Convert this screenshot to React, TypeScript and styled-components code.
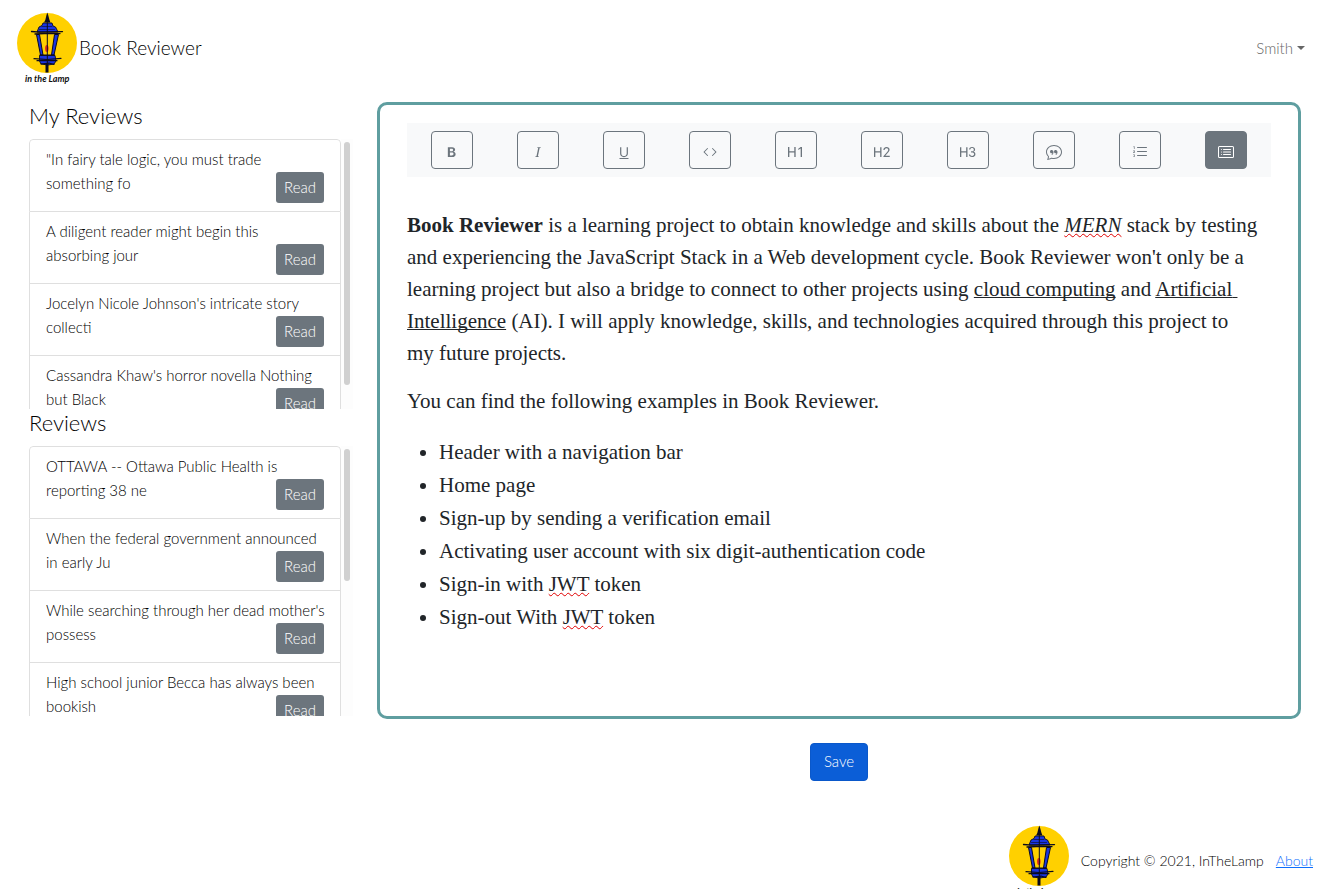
import React from "react";
import styled, { createGlobalStyle } from "styled-components";
import {
  BsTypeBold, BsTypeItalic, BsTypeUnderline, BsCode, BsTypeH1, BsTypeH2, BsTypeH3,
  BsChatQuote, BsListOl, BsCardList,
} from "react-icons/bs";

const GlobalStyle = createGlobalStyle`
  *, *::before, *::after { box-sizing: border-box; }
  body {
    margin: 0;
    background: #fff;
    color: #000;
    font-family: Lato, "Open Sans", sans-serif;
    font-size: 15px;
    font-weight: 300;
    line-height: 24px;
  }
`;

const Navbar = styled.header`
  display: flex;
  align-items: center;
  justify-content: space-between;
  padding: 11px 26px 13px 17px;
`;

const Brand = styled.a`
  display: flex;
  align-items: center;
  gap: 2px;
  color: inherit;
  font-size: 19px;
  text-decoration: none;
`;

const UserMenu = styled.button`
  display: flex;
  align-items: center;
  gap: 4px;
  padding: 0;
  border: 0;
  background: none;
  color: #666;
  font: inherit;
`;

const Caret = styled.span`
  border-top: 4px solid #666;
  border-left: 4px solid transparent;
  border-right: 4px solid transparent;
`;

const Main = styled.main`
  display: grid;
  grid-template-columns: 324px 1fr;
  column-gap: 24px;
  padding: 4px 30px 0 29px;
`;

const Heading = styled.h2`
  margin: 0;
  padding-bottom: 10px;
  font-size: 22px;
  font-weight: 300;
  line-height: 27px;
`;

const Scroller = styled.div`
  display: flex;
  height: 270px;
`;

const List = styled.ul`
  flex: 1;
  margin: 0;
  padding: 0;
  list-style: none;
  overflow-y: auto;
  scrollbar-width: none;
  border-radius: 4px 4px 0 0;
`;

const Item = styled.li`
  display: flow-root;
  padding: 7px 12px 9px 16px;
  border: 1px solid #dfdfdf;
  border-top-width: 0;

  &:first-child {
    border-top-width: 1px;
    border-radius: 4px 4px 0 0;
  }
`;

const Rail = styled.div`
  width: 12px;
  padding: 3px;
  background: #fdfdfd;
`;

const Thumb = styled.div<{ $size: number }>`
  height: ${(p) => p.$size}%;
  border-radius: 3px;
  background: #d0d0d0;
`;

const ReadButton = styled.button`
  float: right;
  width: 48px;
  height: 31px;
  margin: 1px 4px 0 0;
  padding: 0 0 2px;
  border: 0;
  border-radius: 3px;
  background: #6c757d;
  color: #fff;
  font: inherit;

  li & { margin-bottom: -1px; }
`;

const Editor = styled.div`
  min-height: 617px;
  padding: 18px 27px;
  border: 3px solid #5f9ea0;
  border-radius: 10px;
`;

const Toolbar = styled.div`
  display: flex;
  justify-content: space-between;
  padding: 8px 24px;
  background: #f8f9fa;
`;

const Tool = styled.button<{ $active?: boolean }>`
  display: flex;
  align-items: center;
  justify-content: center;
  width: 42px;
  height: 38px;
  padding: 4px 0 0;
  border: 1px solid #6c757d;
  border-radius: 4px;
  background: ${(p) => (p.$active ? "#6c757d" : "transparent")};
  color: ${(p) => (p.$active ? "#fff" : "#6c757d")};
  font-size: 16px;
`;

const Document = styled.div`
  padding-top: 32px;
  outline: none;
  color: #212529;
  font-family: "Liberation Serif", serif;
  font-size: 21px;
  font-weight: 400;
  line-height: 32px;

  p { margin: 0 0 16px; }
  u { text-decoration-thickness: 1px; text-decoration-skip-ink: none; }
  ul { margin: 0; padding: 3px 0 0 32px; line-height: 33px; }
`;

const Misspelt = styled.span`
  text-decoration: underline wavy #e00000 1px;
  text-decoration-skip-ink: none;
`;

const Actions = styled.div`
  display: flex;
  justify-content: center;
  padding-top: 24px;
`;

const SaveButton = styled.button`
  width: 58px;
  height: 38px;
  padding: 0 0 2px;
  border: 1px solid #0a58ca;
  border-radius: 4px;
  background: #0b5ed7;
  color: #fff;
  font: inherit;
`;

const Footer = styled.footer`
  display: flex;
  align-items: center;
  justify-content: flex-end;
  gap: 12px;
  padding: 43px 18px 12px;
  font-size: 14px;

  a { color: #0d6efd; }
`;

const LogoText = styled.text`
  font-size: 9px;
  font-style: italic;
  font-weight: 700;
`;

const Lamp = () => (
  <svg width="60" height="74" viewBox="0 0 60 74" aria-label="In the Lamp" role="img">
    <circle cx="30" cy="32" r="30" fill="#ffd000" />
    <g fill="#1a35e0" stroke="#0a0a1e" strokeLinejoin="round">
      <path d="M26 12h9l1 3 2.500 1 2.500 5H20l2-5 3-1.500z" strokeWidth=".9" />
      <path d="M19.500 23.500h3L26 44h-2.500zM41.500 23.500h-4L34.500 44H37z" strokeWidth="1" />
      <path d="M22.500 44.500h15.500l1 5.500-2 3-6 1-7-1-1.500-3z" strokeWidth=".9" />
    </g>
    <path d="M28.300 9l1.200-5 .8-2.500 1 3 1.200 4.500 1 2.500h-6.500z" fill="#0a0a1e" />
    <ellipse cx="29.800" cy="37.500" rx="1.800" ry="3.500" fill="#e8331c" />
    <g fill="none" stroke="#0a0a1e" strokeLinecap="round">
      <path d="M14.500 20.500l8 .7 23-.6" strokeWidth="1.300" />
      <path d="M18 23l14-.6 11 .2" strokeWidth="1.300" />
      <path d="M17 47.700l13 .8 14-1.200M20 49.700h20M23 44h14.500M24 53l8-1 5 1.500" strokeWidth="1.200" />
      <path d="M22.500 18.500h15M25 15.500h10" strokeWidth=".6" />
      <path d="M30.300 8v44" strokeWidth="1" />
      <path d="M30 52v9.500" strokeWidth="3" strokeLinecap="butt" />
    </g>
    <LogoText x="8" y="71" fill="#111">in the Lamp</LogoText>
  </svg>
);

const myReviews = [
  "\"In fairy tale logic, you must trade something fo",
  "A diligent reader might begin this absorbing\u00a0jour",
  "Jocelyn Nicole Johnson's intricate story collecti",
  "Cassandra Khaw's horror novella Nothing but\u00a0Black",
];
const reviews = [
  "OTTAWA -- Ottawa Public Health is reporting 38 ne",
  "When the federal government announced in\u00a0early Ju",
  "While searching through her dead mother's possess",
  "High school junior Becca has always been bookish",
];

const ReviewList = ({ title, items, thumb }: { title: string; items: string[]; thumb: number }) => (
  <section>
    <Heading>{title}</Heading>
    <Scroller>
      <List>
        {items.map((t) => (
          <Item key={t}>{t}<ReadButton>Read</ReadButton></Item>
        ))}
      </List>
      <Rail><Thumb $size={thumb} /></Rail>
    </Scroller>
  </section>
);

const tools = [
  { label: "Bold", Icon: BsTypeBold }, { label: "Italic", Icon: BsTypeItalic },
  { label: "Underline", Icon: BsTypeUnderline }, { label: "Code", Icon: BsCode },
  { label: "Heading 1", Icon: BsTypeH1 }, { label: "Heading 2", Icon: BsTypeH2 },
  { label: "Heading 3", Icon: BsTypeH3 }, { label: "Quote", Icon: BsChatQuote },
  { label: "Ordered list", Icon: BsListOl }, { label: "Bulleted list", Icon: BsCardList, active: true },
];

export default function App() {
  return (
    <>
      <GlobalStyle />
      <Navbar>
        <Brand href="#"><Lamp />Book Reviewer</Brand>
        <UserMenu>Smith<Caret /></UserMenu>
      </Navbar>
      <Main>
        <aside>
          <ReviewList title="My Reviews" items={myReviews} thumb={92} />
          <ReviewList title="Reviews" items={reviews} thumb={50} />
        </aside>
        <div>
          <Editor>
            <Toolbar role="toolbar">
              {tools.map(({ label, Icon, active }) => (
                <Tool key={label} aria-label={label} $active={active}><Icon /></Tool>
              ))}
            </Toolbar>
            <Document role="textbox" aria-label="Review" aria-multiline="true" contentEditable suppressContentEditableWarning spellCheck={false}>
              <p>
                <b>Book Reviewer</b> is a learning project to obtain knowledge and skills about the{" "}
                <Misspelt as="em">MERN</Misspelt> stack by testing and experiencing the JavaScript Stack in a Web
                development cycle. Book Reviewer won't only be a learning project but also a bridge to connect to
                other projects using <u>cloud computing</u> and <u>Artificial{"\u00a0"}<wbr />Intelligence</u> (AI). I
                will apply knowledge, skills, and technologies acquired through this project to my{"\u00a0"}future
                projects.
              </p>
              <p>You can find the following examples in Book Reviewer.</p>
              <ul>
                <li>Header with a navigation bar</li>
                <li>Home page</li>
                <li>Sign-up by sending a verification email</li>
                <li>Activating user account with six digit-authentication code</li>
                <li>Sign-in with <Misspelt>JWT</Misspelt> token</li>
                <li>Sign-out With <Misspelt>JWT</Misspelt> token</li>
              </ul>
            </Document>
          </Editor>
          <Actions><SaveButton>Save</SaveButton></Actions>
        </div>
      </Main>
      <Footer><Lamp /><span>Copyright © 2021, InTheLamp</span><a href="#about">About</a></Footer>
    </>
  );
}
